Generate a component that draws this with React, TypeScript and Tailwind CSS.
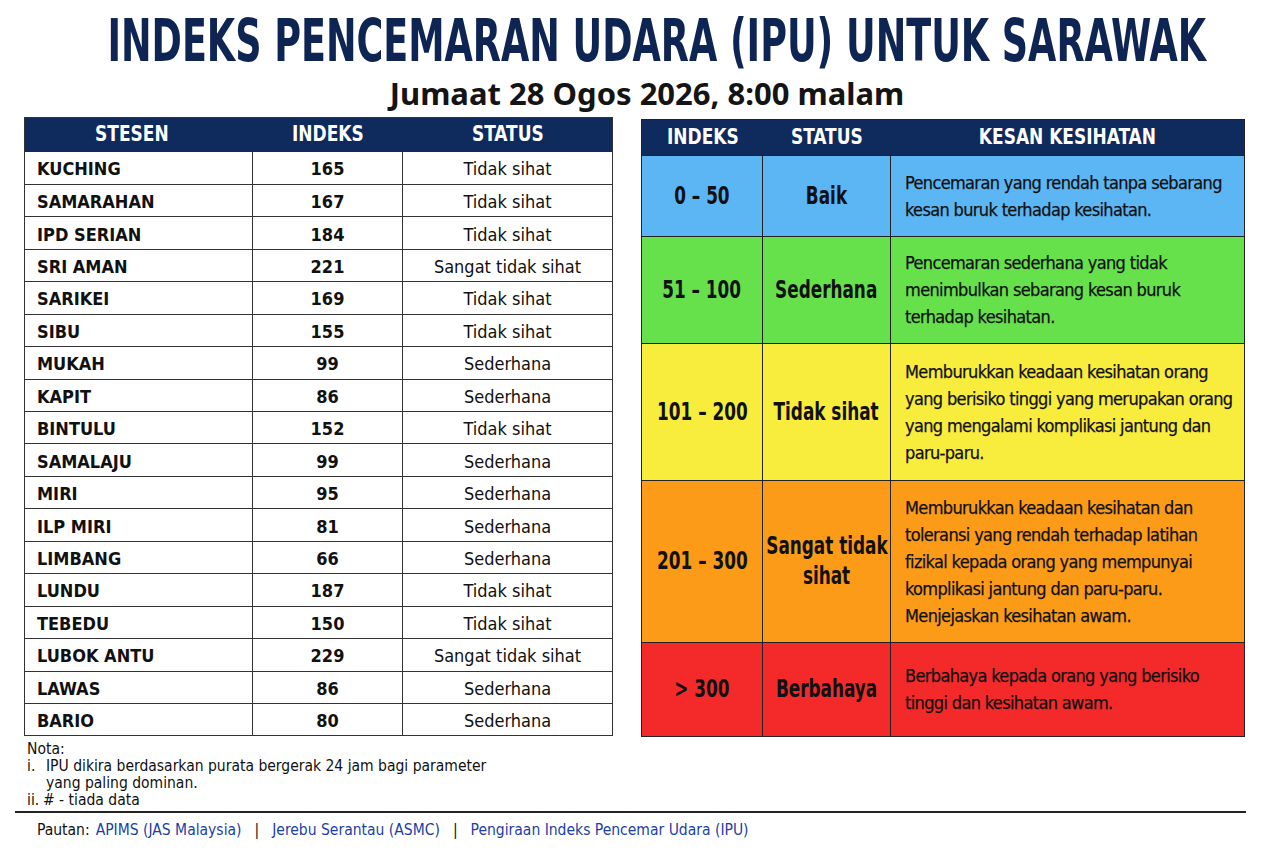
import React from "react";

const stations: [string, string, string][] = [
  ["KUCHING", "165", "Tidak sihat"],
  ["SAMARAHAN", "167", "Tidak sihat"],
  ["IPD SERIAN", "184", "Tidak sihat"],
  ["SRI AMAN", "221", "Sangat tidak sihat"],
  ["SARIKEI", "169", "Tidak sihat"],
  ["SIBU", "155", "Tidak sihat"],
  ["MUKAH", "99", "Sederhana"],
  ["KAPIT", "86", "Sederhana"],
  ["BINTULU", "152", "Tidak sihat"],
  ["SAMALAJU", "99", "Sederhana"],
  ["MIRI", "95", "Sederhana"],
  ["ILP MIRI", "81", "Sederhana"],
  ["LIMBANG", "66", "Sederhana"],
  ["LUNDU", "187", "Tidak sihat"],
  ["TEBEDU", "150", "Tidak sihat"],
  ["LUBOK ANTU", "229", "Sangat tidak sihat"],
  ["LAWAS", "86", "Sederhana"],
  ["BARIO", "80", "Sederhana"],
];

const levels = [
  { range: "0 – 50", status: ["Baik"], bg: "bg-[#5cb6f4]", h: "h-[81px]", text: ["Pencemaran yang rendah tanpa sebarang", "kesan buruk terhadap kesihatan."] },
  { range: "51 – 100", status: ["Sederhana"], bg: "bg-[#66e14c]", h: "h-[107px]", text: ["Pencemaran sederhana yang tidak", "menimbulkan sebarang kesan buruk", "terhadap kesihatan."] },
  { range: "101 – 200", status: ["Tidak sihat"], bg: "bg-[#f8ec3c]", h: "h-[137px]", text: ["Memburukkan keadaan kesihatan orang", "yang berisiko tinggi yang merupakan orang", "yang mengalami komplikasi jantung dan", "paru-paru."] },
  { range: "201 – 300", status: ["Sangat tidak", "sihat"], bg: "bg-[#fb9b18]", h: "h-[162px]", text: ["Memburukkan keadaan kesihatan dan", "toleransi yang rendah terhadap latihan", "fizikal kepada orang yang mempunyai", "komplikasi jantung dan paru-paru.", "Menjejaskan kesihatan awam."] },
  { range: "> 300", status: ["Berbahaya"], bg: "bg-[#f42a2a]", h: "h-[94px]", text: ["Berbahaya kepada orang yang berisiko", "tinggi dan kesihatan awam."] },
];

const cond = { fontFamily: '"DejaVu Sans Condensed", "DejaVu Sans", sans-serif' };

function Hd({ children }: { children: React.ReactNode }) {
  return <span className="inline-block whitespace-nowrap scale-x-[0.9] origin-center">{children}</span>;
}

function Lbl({ children }: { children: React.ReactNode }) {
  return <span className="inline-block whitespace-nowrap scale-x-[0.75] origin-center">{children}</span>;
}

export default function App() {
  return (
    <div className="w-[1280px] h-[854px] bg-white text-[#111] overflow-hidden" style={cond}>
      <div className="flex justify-center pt-[11px] pl-[34px] h-[71px]">
        <h1 className="inline-block whitespace-nowrap text-[58px] leading-[60px] font-bold text-[#0e2452] scale-x-[0.7] origin-center">
          INDEKS PENCEMARAN UDARA (IPU) UNTUK SARAWAK
        </h1>
      </div>
      <div className="flex justify-center pl-[14px] mt-[4px]">
        <div className="text-[31px] leading-[36px] font-bold text-[#141414]" style={{ fontFamily: '"Noto Sans", "Open Sans", sans-serif' }}>
          Jumaat 28 Ogos 2026, 8:00 malam
        </div>
      </div>

      <div className="flex items-start mt-[6px] pl-[24px] gap-[28px]">
        {/* Left table */}
        <div className="w-[589px] border-[1.5px] border-[#333] flex flex-col">
          <div className="flex h-[33.5px] bg-[#0f2a5c] text-white font-bold text-[21px] items-center">
            <div className="w-[228px] text-center pr-[14px]"><Hd>STESEN</Hd></div>
            <div className="w-[150px] text-center"><Hd>INDEKS</Hd></div>
            <div className="flex-1 text-center"><Hd>STATUS</Hd></div>
          </div>
          {stations.map(([n, i, s], idx) => (
            <div key={n} className={`flex h-[32.45px] items-center text-[18px] ${idx > 0 ? "border-t-[1.5px] border-[#333]" : ""}`}>
              <div className="w-[228px] h-full flex items-center pl-[12px] pt-[2px] font-bold border-r-[1.5px] border-[#333]">{n}</div>
              <div className="w-[150px] h-full flex items-center justify-center pt-[2px] font-bold border-r-[1.5px] border-[#333]">{i}</div>
              <div className="flex-1 h-full flex items-center justify-center pt-[2px]">{s}</div>
            </div>
          ))}
        </div>

        {/* Right table */}
        <div className="w-[604px] mt-[2px] border-[1.5px] border-[#222] flex flex-col">
          <div className="flex h-[34.5px] bg-[#0f2a5c] text-white font-bold text-[21px] items-center">
            <div className="w-[121px] text-center"><Hd>INDEKS</Hd></div>
            <div className="w-[128px] text-center"><Hd>STATUS</Hd></div>
            <div className="flex-1 text-center"><Hd>KESAN KESIHATAN</Hd></div>
          </div>
          {levels.map((l) => (
            <div key={l.range} className={`flex ${l.h} ${l.bg} border-t-[1.5px] border-[#222]`}>
              <div className="w-[121px] flex items-center justify-center font-bold text-[25px] border-r-[1.5px] border-[#222]">
                <Lbl>{l.range}</Lbl>
              </div>
              <div className="w-[128px] flex flex-col items-center justify-center font-bold text-[25px] leading-[30px] border-r-[1.5px] border-[#222]">
                {l.status.map((s) => (
                  <Lbl key={s}>{s}</Lbl>
                ))}
              </div>
              <div className="flex-1 flex flex-col justify-center pl-[14px] text-[18px] leading-[27px] tracking-[-0.65px] whitespace-nowrap [-webkit-text-stroke:0.25px_#111]">
                {l.text.map((t) => (
                  <div key={t}>{t}</div>
                ))}
              </div>
            </div>
          ))}
        </div>
      </div>

      <div className="pl-[27px] mt-[4px] text-[15.5px] leading-[17px] text-[#111]">
        <div>Nota:</div>
        <div className="flex"><span className="w-[19px]">i.</span><span>IPU dikira berdasarkan purata bergerak 24 jam bagi parameter</span></div>
        <div className="pl-[19px]">yang paling dominan.</div>
        <div className="flex"><span className="w-[16px]">ii.</span><span># - tiada data</span></div>
      </div>
      <div className="ml-[15px] mr-[34px] mt-[2px] h-[2px] bg-[#222]" />
      <div className="pl-[37px] mt-[7px] text-[15.5px] leading-[20px] flex items-center">
        <span>Pautan:</span>
        <span className="ml-[6px] text-[#1b3fa8]">APIMS (JAS Malaysia)</span>
        <span className="mx-[13px]">|</span>
        <span className="text-[#1b3fa8]">Jerebu Serantau (ASMC)</span>
        <span className="mx-[13px]">|</span>
        <span className="text-[#1b3fa8]">Pengiraan Indeks Pencemar Udara (IPU)</span>
      </div>
    </div>
  );
}
